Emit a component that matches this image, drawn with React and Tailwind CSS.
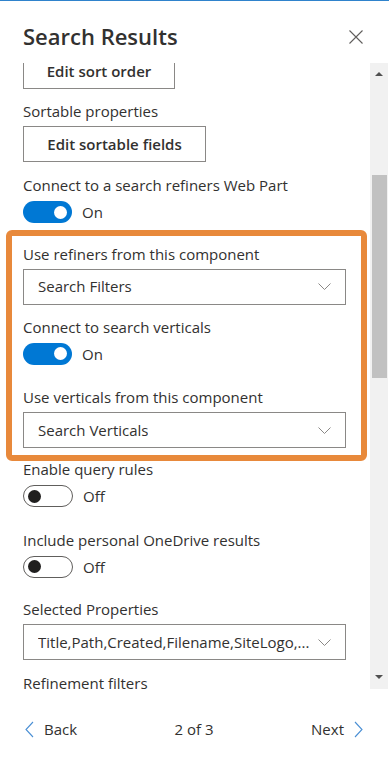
import React from 'react';

const font = { fontFamily: '"Open Sans", "Noto Sans", sans-serif' };

function Chevron() {
    return (
        <svg width="13" height="7" viewBox="0 0 13 7" fill="none" className="shrink-0">
            <path d="M0.5 0.5l6 6 6-6" stroke="#8a8886" strokeWidth="1" />
        </svg>
    );
}

function Label({ children }) {
    return <div className="text-[15px] leading-[22px] text-[#323130]">{children}</div>;
}

function Dropdown({ value }) {
    return (
        <div className="mt-[4px] h-[36px] border border-[#8a8886] flex items-center justify-between pl-[14px] pr-[14px]">
            <span className="text-[15px] text-[#323130] truncate">{value}</span>
            <Chevron />
        </div>
    );
}

function Toggle({ on }) {
    return (
        <div className="mt-[5px] flex items-center gap-[10px]">
            {on ? (
                <div className="w-[49px] h-[22px] rounded-full bg-[#0078d4] flex items-center justify-end pr-[5px]">
                    <div className="w-[13px] h-[13px] rounded-full bg-white" />
                </div>
            ) : (
                <div className="w-[50px] h-[22px] rounded-full border border-[#605e5c] flex items-center pl-[4px]">
                    <div className="w-[13px] h-[13px] rounded-full bg-[#201f1e]" />
                </div>
            )}
            <span className="text-[15px] text-[#323130]">{on ? 'On' : 'Off'}</span>
        </div>
    );
}

export default function App() {
    return (
        <div style={font} className="w-[389px] h-[768px] bg-white flex flex-col border-t border-[#2f83cc] overflow-hidden">
            {/* header */}
            <div className="h-[62px] flex items-start pl-[23px] pr-[26px] pt-[19px]">
                <h1 className="text-[22px] leading-[32px] font-semibold text-[#323130]">Search Results</h1>
                <svg width="14" height="14" viewBox="0 0 14 14" className="ml-auto mt-[10px]">
                    <path d="M0.5 0.5l13 13M13.5 0.5l-13 13" stroke="#605e5c" strokeWidth="1.1" />
                </svg>
            </div>

            {/* scrolling body */}
            <div className="h-[626px] flex">
                <div className="flex-1 overflow-hidden pl-[23px] pr-[24px]">
                    <div className="-mt-[10px]">
                        <button className="w-[152px] h-[36px] border border-[#8a8886] text-[15px] font-semibold text-[#323130]">
                            Edit sort order
                        </button>

                        <div className="mt-[11px]">
                            <Label>Sortable properties</Label>
                            <button className="mt-[4px] w-[183px] h-[36px] border border-[#8a8886] text-[15px] font-semibold text-[#323130]">
                                Edit sortable fields
                            </button>
                        </div>

                        <div className="mt-[12px]">
                            <Label>Connect to a search refiners Web Part</Label>
                            <Toggle on />
                        </div>

                        <div className="mt-[6px] -ml-[17px] -mr-[21px] border-[6px] border-[#e8893b] rounded-[6px] pl-[11px] pr-[15px] pt-[7px] pb-[7px]">
                            <Label>Use refiners from this component</Label>
                            <Dropdown value="Search Filters" />

                            <div className="mt-[11px]">
                                <Label>Connect to search verticals</Label>
                                <Toggle on />
                            </div>

                            <div className="mt-[21px]">
                                <Label>Use verticals from this component</Label>
                                <Dropdown value="Search Verticals" />
                            </div>
                        </div>

                        <div className="-mt-[3px]">
                            <Label>Enable query rules</Label>
                            <Toggle />
                        </div>

                        <div className="mt-[21px]">
                            <Label>Include personal OneDrive results</Label>
                            <Toggle />
                        </div>

                        <div className="mt-[20px]">
                            <Label>Selected Properties</Label>
                            <Dropdown value="Title,Path,Created,Filename,SiteLogo,..." />
                        </div>

                        <div className="mt-[12px]">
                            <Label>Refinement filters</Label>
                        </div>
                    </div>
                </div>

                {/* scrollbar */}
                <div className="w-[18px] mr-[1px] bg-[#f1f1f1] flex flex-col items-center">
                    <div className="h-[22px] flex items-center">
                        <div className="w-0 h-0 border-l-[4px] border-r-[4px] border-b-[4px] border-l-transparent border-r-transparent border-b-[#505050]" />
                    </div>
                    <div className="mt-[90px] w-[15px] h-[203px] bg-[#c1c1c1]" />
                    <div className="mt-auto h-[24px] flex items-center">
                        <div className="w-0 h-0 border-l-[4px] border-r-[4px] border-t-[4px] border-l-transparent border-r-transparent border-t-[#505050]" />
                    </div>
                </div>
            </div>

            {/* footer */}
            <div className="flex-1 flex items-center justify-between pl-[25px] pr-[26px] pt-[2px] text-[15px] text-[#323130]">
                <div className="flex items-center gap-[10px]">
                    <svg width="9" height="17" viewBox="0 0 9 17">
                        <path d="M8 1L1 8.5l7 7.5" stroke="#4a8fd4" strokeWidth="1.1" fill="none" />
                    </svg>
                    <span>Back</span>
                </div>
                <span>2 of 3</span>
                <div className="flex items-center gap-[10px]">
                    <span>Next</span>
                    <svg width="9" height="17" viewBox="0 0 9 17">
                        <path d="M1 1l7 7.5-7 7.5" stroke="#4a8fd4" strokeWidth="1.1" fill="none" />
                    </svg>
                </div>
            </div>
        </div>
    );
}
